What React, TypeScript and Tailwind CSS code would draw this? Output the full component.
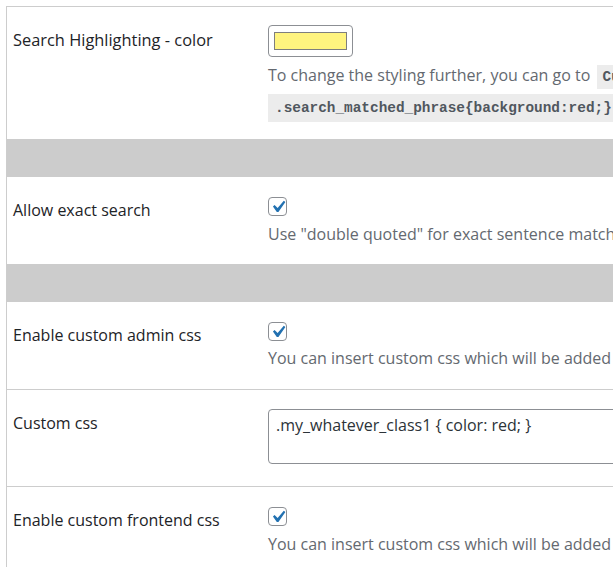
import React from 'react';

const font = "font-['Open_Sans','Noto_Sans',sans-serif]";

const Check: React.FC = () => (
  <div className="w-[19px] h-[19px] rounded-[4px] border border-[#8c8f94] bg-white flex items-center justify-center overflow-visible">
    <svg width="24" height="24" viewBox="0 0 20 20" className="shrink-0 -m-[4px]">
      <path d="M14.83 4.89l1.34.94-5.81 8.38H9.02L5.78 9.67l1.34-1.25 2.57 2.4z" fill="#2271b1" />
    </svg>
  </div>
);

const Band: React.FC = () => <div className="h-[38px] bg-[#cccccc]" />;

const App: React.FC = () => {
  return (
    <div className={`w-[613px] h-[578px] overflow-hidden bg-white pt-[6px] pl-[6px] ${font}`}>
      <div className="w-[900px] h-[561px] border-l border-t border-[#cdcdcd] text-[16px] leading-[20px] text-[#1d2327]">
        {/* Search highlighting colour */}
        <div className="flex h-[132px]">
          <div className="w-[261px] pl-[6px] pt-[23px] text-[16.4px]">Search Highlighting - color</div>
          <div className="pt-[18px]">
            <div className="w-[85px] h-[32px] rounded-[4px] border border-[#8c8f94] bg-white flex items-center justify-center">
              <div className="w-[73px] h-[18px] border border-[#7e7e7e] bg-[#fff47f]" />
            </div>
            <div className="mt-[8px] whitespace-nowrap text-[#646970]">
              To change the styling further, you can go to{' '}
              <code className="ml-[2px] px-[6px] py-[4px] bg-[#ececec] font-['Liberation_Mono',monospace] font-bold text-[14.4px] text-[#50575e]">
                Customize &gt; Additional CSS
              </code>
            </div>
            <div className="mt-[7px] h-[28px] w-[360px] bg-[#ececec] pl-[7px] flex items-center whitespace-nowrap font-['Liberation_Mono',monospace] font-bold text-[14.4px] text-[#50575e]">
              .search_matched_phrase&#123;background:red;&#125;
            </div>
          </div>
        </div>

        <Band />

        {/* Exact search */}
        <div className="flex h-[87px]">
          <div className="w-[261px] pl-[6px] pt-[23px]">Allow exact search</div>
          <div className="pt-[20px]">
            <Check />
            <div className="mt-[8px] whitespace-nowrap text-[#646970]">
              Use "double quoted" for exact sentence match
            </div>
          </div>
        </div>

        <Band />

        {/* Custom admin css */}
        <div className="flex h-[88px] border-b border-[#cdcdcd]">
          <div className="w-[261px] pl-[6px] pt-[23px]">Enable custom admin css</div>
          <div className="pt-[20px]">
            <Check />
            <div className="mt-[7px] whitespace-nowrap text-[#646970]">
              You can insert custom css which will be added to the admin area
            </div>
          </div>
        </div>

        <div className="flex h-[97px] border-b border-[#cdcdcd]">
          <div className="w-[261px] pl-[6px] pt-[23px]">Custom css</div>
          <div className="pt-[19px]">
            <div className="w-[400px] h-[55px] rounded-[4px] border border-[#8c8f94] bg-white px-[7px] pt-[5px] text-[#2c3338] whitespace-nowrap">
              .my_whatever_class1 &#123; color: red; &#125;
            </div>
          </div>
        </div>

        {/* Custom frontend css */}
        <div className="flex h-[80px]">
          <div className="w-[261px] pl-[6px] pt-[23px]">Enable custom frontend css</div>
          <div className="pt-[20px]">
            <Check />
            <div className="mt-[8px] whitespace-nowrap text-[#646970]">
              You can insert custom css which will be added to the frontend
            </div>
          </div>
        </div>
      </div>
    </div>
  );
};

export default App;
